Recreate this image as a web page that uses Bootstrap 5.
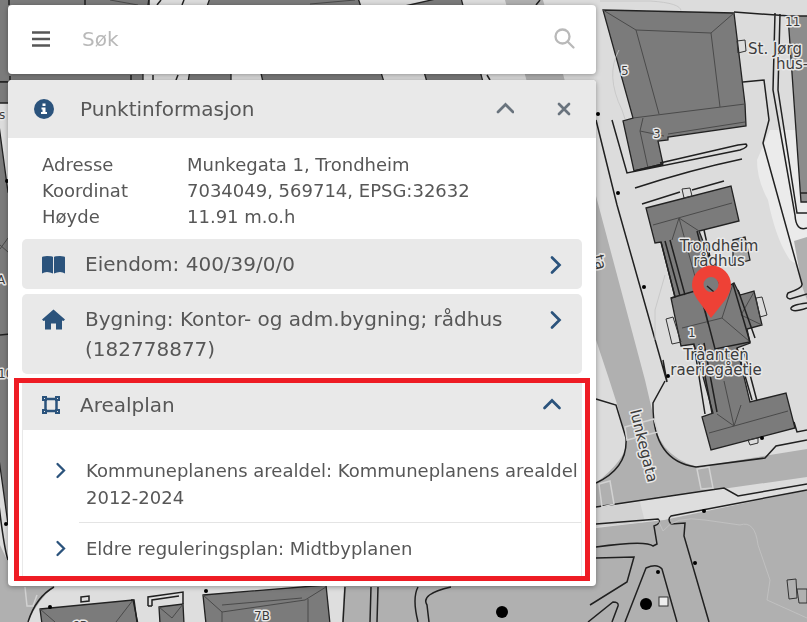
<!DOCTYPE html>
<html lang="no">
<head>
<meta charset="utf-8">
<meta name="viewport" content="width=device-width, initial-scale=1">
<title>Kart – Punktinformasjon</title>
<link href="https://cdn.jsdelivr.net/npm/bootstrap@5.3.0/dist/css/bootstrap.min.css" rel="stylesheet">
<style>
  body { font-family: "DejaVu Sans", Verdana, sans-serif; color: #575757; background: #dcdcdc; min-height: 100vh; overflow: hidden; }
  .map-canvas { position: fixed; inset: 0; width: 100%; height: 100%; }
  .map-canvas text { font-family: "DejaVu Sans", Verdana, sans-serif; fill: #3c3c3c; stroke: #e8e8e8; stroke-width: 3px; paint-order: stroke; stroke-linejoin: round; }
  .side-panel { position: relative; width: 100%; max-width: 604px; padding: 5px 8px; gap: 6px; }
  .sheet { background: #fff; border-radius: 4px; box-shadow: 0 1px 5px rgba(0,0,0,.35); }
  .search-bar { padding: 17px 20px 18px; }
  .search-bar input { font-size: 20px; line-height: 30px; color: #575757; padding: 2px 0; background: transparent; }
  .search-bar input::placeholder { color: #b9b9b9; opacity: 1; }
  .bare-btn { border: 0; background: none; padding: 0; color: inherit; line-height: 1; }
  .tone { background: #e9e9e9; }
  .sheet-head { padding: 14px 22px 14px 24px; border-radius: 4px 4px 0 0; }
  .head-text { font-size: 20px; line-height: 30px; font-weight: 400; margin: 0; }
  .facts { font-size: 18px; line-height: 26px; margin: 14px 34px 9px; }
  .facts th { font-weight: 400; width: 145px; padding: 0; }
  .facts td { padding: 0; }
  .entries { padding: 0 14px; gap: 5px; }
  .entry { padding: 10px 20px; border-radius: 5px; text-align: left; gap: 20px; color: #575757; text-decoration: none; font-size: 20px; line-height: 30px; }
  .blue { color: #2b537c; }
  .slate { color: #69737d; }
  .pale { color: #b9b9b9; }
  .marked-wrap { padding: 4px 6px 5px; }
  .marked { border: 5px solid #ee1c24; padding: 0 3px; }
  .plan-head { padding: 7px 20px 10px; font-size: 20px; line-height: 30px; color: #575757; border: 0; }
  .plan-list { border: solid #e9e9e9; border-width: 0 1px; padding: 27px 0 14px; font-size: 18px; line-height: 27px; }
  .plan-list a { color: #575757; text-decoration: none; padding-left: 32px; }
  .plan-list svg { margin-top: 5px; }
  .plan-name { padding-left: 7px; }
  .plan-first { border-bottom: 1px solid #e4e4e4; padding-bottom: 11px; margin-bottom: 12px; }
</style>
<script src="https://cdn.jsdelivr.net/npm/bootstrap@5.3.0/dist/js/bootstrap.bundle.min.js"></script>
</head>
<body>
<svg class="map-canvas" viewBox="0 0 807 622" preserveAspectRatio="xMinYMin slice" role="img" aria-label="Kart over Trondheim sentrum">
  <rect width="807" height="622" fill="#dcdcdc"/>
  <!-- ground and streets -->
  <g fill="#b0b0b0">
    <path d="M0 545L8 562V622H0ZM0 560H596V622H0Z"/>
    <path d="M505 0H543L596 196L645 380L652 410Q655 455 697 467L807 449V477L596 507V483Q630 456 626 438L617 404L608 376L596 340Z"/>
    <path d="M596 528L664 520L807 490V622H590Z"/>
  </g>
  <path d="M596 508L725 488L738 496L807 484V489L669 515L668 519L658 520L596 527Z" fill="#dedede"/>
  <path d="M596 508L640 502L645 522L596 527Z" fill="#d2d2d2"/>
  <path d="M770 130L757 160Q757 180 768 200Q776 240 790 260L796 264L807 300V130Z" fill="#ebebeb"/>
  <path d="M794 241L807 237V300L802 286Z" fill="#b0b0b0"/>
  <path d="M802 287L807 300V622H802Z" fill="none"/>
  <path d="M28 622Q38 599 56 585H330V622Z" fill="#dedede"/>
  <path d="M327 585H344L342 622H329Z" fill="#dedede"/>
  <!-- buildings -->
  <g fill="#7b7b7b" stroke="#222" stroke-width="1.300">
    <path d="M-2 -2H149L143 40V82H-2Z"/>
    <path d="M210 -2H358L360 4L384 82H263L258 60H231V82H188L195 40Z"/>
    <path d="M405 6L440 -2H461L483 82H427Z"/>
    <path d="M603 10L734 13L745 104L746 126L668 137V140L658 141L663 164L634 171L623 121L633 118Z"/>
    <path d="M788 16H809V202H801Z" fill="#8c8c8c"/>
    <path d="M646 208L731 186L739 221L699 231L722 290L734 283L740 295L754 291L762 325L747 329L750 343L737 348L750 402L786 393L795 428L711 450L702 417L713 413L694 344L681 346L671 298L675 297L661 242L655 243Z"/>
    <path d="M733 240L745 237L750 260L733 265Z" fill="#a6a6a6"/>
    <path d="M40 609L133 600L138 624H42Z"/>
    <path d="M159 607L183 604L184 624H160Z"/>
    <path d="M203 595L326 585L330 624H206Z"/>
    <path d="M-2 82H12V103H-2Z"/>
    <path d="M-2 118L8 192H14V524H8L-2 452Z"/>
  </g>
  <!-- roof ridges -->
  <g fill="none" stroke="#4a4a4a" stroke-width="1">
    <path d="M603 10L636 30L711 33L734 13M636 30L659 114M711 33L720 107M633 118L745 104M668 134L745 122M643 118L640 131L664 136M640 131L648 168"/>
    <path d="M653 225L732 203M672 240L679 218L699 231M679 218L708 324M682 328L722 318L733 284M722 318L749 341M741 315L754 292M741 315L762 325M709 433L788 411M717 414L734 426L741 405M724 381L734 426"/>
    <path d="M40 609L55 622M133 600L116 622M159 607L172 618L183 604M203 595L222 612V622M222 612L305 600L326 587M222 605L302 598M308 599V622M110 0L138 5M310 4L355 0M0 245L8 252M0 249L8 238"/>
  </g>
  <g fill="none" stroke="#202020" stroke-width="1.500">
    <path d="M9 0V5M85 0V5M149 0V5M161 0L157 5M184 0L182 5M131 75V80M153 75V80M178 75L176 80M540 0L536 5M10 76V82M487 75L490 80M0 335L10 334"/>
    <path d="M661 242L675 297M665 241L680 296M670 240L685 295M697 231L706 266M704 230L712 266M671 298L695 291M733 284L750 342L715 349L703 303M738 290L755 338M707 286L714 292"/>
    <path d="M694 345L705 414M699 344L712 413M704 343L717 412M737 348L752 400M743 348L757 401"/>
    <path d="M612 120L627 173L740 150Q749 147 746 144L738 145L660 163M634 171L663 164M635 188Q690 170 742 159M642 204L680 192M692 190L724 181"/>
    <path d="M596 120L617 205L667 382L663 360M665 381L653 403Q652 461 696 467L765 458L776 446L807 440M596 399L616 405L626 438Q628 468 596 483M596 507L724 488L738 496L807 484M596 524L658 519Q662 523 654 526L657 544L653 546Q646 540 596 547M807 490L671 516Q667 519 671 524L685 523L684 536L709 622M596 558L634 557L627 582L590 605M588 622L613 602Q619 602 618 606L612 622M625 622L646 568Q657 563 662 569L677 622M734 12L790 16M743 82L764 80L769 120L763 143L802 284Q803 288 788 293Q785 298 790 299L807 294M807 303Q790 305 791 309Q793 313 807 308M775 13L773 90L795 215Q796 232 807 228M780 14L778 90L797 213H807M794 422L797 432L807 430M801 193H807"/>
    <path d="M28 622Q36 597 54 587M345 587L343 622M371 587L370 622M378 587L377 622M418 587Q412 598 418 622M451 587Q420 594 427 605L429 622M-1 505Q4 548 8 560M148 606V597L183 592V604M152 606V600L179 596M148 606H152M131 600H134L137 622M81 597L89 596V601L81 602Z"/>
  </g>
  <!-- porches, kerbs and crossings -->
  <g fill="none" stroke="#333" stroke-width="1">
    <path d="M737 41L745 40L746 51L738 53ZM682 189L690 188L692 196L684 198ZM666 319L673 317L681 342L672 344ZM756 298L762 297L767 315L760 317ZM748 440L758 438V443L750 445ZM787 580L796 579L797 598L789 599ZM797 589H807V603H799Z"/>
    <rect x="659" y="597" width="9" height="9" fill="#eee"/>
  </g>
  <g fill="none" stroke="#d2d2d2" stroke-width="1.500">
    <path d="M625 427L654 419L658 432L627 440ZM697 469L709 467L713 488L701 489ZM599 484L610 481L614 504L602 507ZM25 587L27 606H33L37 595"/>
  </g>
  <g fill="none" stroke="#c4c4c4" stroke-width=".8">
    <path d="M600 1H650Q681 3 681 11M619 50Q605 75 622 110L625 119M665 275L655 310L655 340M658 520L663 531Q675 515 705 520L740 525Q755 520 758 545L770 580L767 600L807 618"/>
  </g>
  <g fill="#000">
    <circle cx="598" cy="114" r="2"/><circle cx="618" cy="193" r="2"/><circle cx="644" cy="287" r="2"/><circle cx="668" cy="376" r="2"/><circle cx="762" cy="438" r="2"/><circle cx="704" cy="511" r="2"/><circle cx="695" cy="563" r="2"/><circle cx="658" cy="572" r="2"/><circle cx="646" cy="604" r="6"/><circle cx="502" cy="612" r="6"/><circle cx="50" cy="607" r="2"/><circle cx="206" cy="591" r="2"/><circle cx="6" cy="524" r="2"/><circle cx="7" cy="181" r="2"/>
  </g>
  <g font-size="15">
    <text x="748" y="54">St. Jørg</text><text x="776" y="69">hus-</text>
    <text x="719" y="251" text-anchor="middle">Trondheim</text><text x="719" y="266" text-anchor="middle">rådhus</text>
    <text x="716" y="360" text-anchor="middle">Tråanten</text><text x="716" y="375" text-anchor="middle">raeriegåetie</text>
    <text transform="translate(630 411) rotate(76)">lunkegata</text>
    <text transform="translate(593 256) rotate(76)">ta</text>
  </g>
  <g font-size="12" stroke-width="4">
    <text x="621" y="75">5</text><text x="653" y="138">3</text><text x="785" y="26">11</text><text x="688" y="337">1</text><text x="254" y="620">7B</text><text x="72" y="630">6B</text><text x="-2" y="378">10</text><text x="-3" y="284">A</text><text x="-1" y="119">s</text>
  </g>
  <path d="M711 318L697 299Q692 291 692 285A19.500 19.500 0 0 1 731 285Q731 291 726 299ZM711 277A7.500 7.500 0 1 0 711 292A7.500 7.500 0 1 0 711 277Z" fill="#ee4136" fill-rule="evenodd"/>
</svg>

<main class="side-panel d-flex flex-column">
  <form class="sheet search-bar d-flex align-items-center" role="search">
    <button type="button" class="bare-btn ps-1 pe-4" aria-label="Meny"><svg width="18" height="16" viewBox="0 0 18 16" stroke="currentColor" stroke-width="2.500"><path d="M0 1.500H18M0 8H18M0 14.500H18"/></svg></button>
    <input type="text" class="form-control border-0 shadow-none ms-2" placeholder="Søk" aria-label="Søk">
    <button type="submit" class="bare-btn pale" aria-label="Søk"><svg width="22" height="22" viewBox="0 0 22 22" fill="none" stroke="currentColor" stroke-width="2.300" stroke-linecap="round"><circle cx="8.500" cy="8.500" r="7"/><path d="M13.500 13.500L19.500 19.500"/></svg></button>
  </form>

  <section class="sheet">
    <header class="sheet-head tone d-flex align-items-center">
      <svg class="blue me-4" width="24" height="24" viewBox="0 0 24 24"><circle cx="12" cy="12" r="10" fill="currentColor"/><path d="M10.500 6.500H13.500V9H10.500ZM9.500 10.500H13.500V15H15V17H9V15H10.500V12.500H9.500Z" fill="#fff"/></svg>
      <h1 class="head-text flex-grow-1">Punktinformasjon</h1>
      <button type="button" class="bare-btn slate" aria-label="Skjul"><svg width="20" height="20" viewBox="0 0 20 20" fill="none" stroke="currentColor" stroke-width="2.700" stroke-linecap="round"><path d="M4 13L11.500 5.500L19 13"/></svg></button>
      <button type="button" class="bare-btn slate ms-4 ps-3" aria-label="Lukk"><svg width="20" height="20" viewBox="0 0 20 20" fill="none" stroke="currentColor" stroke-width="2.700" stroke-linecap="round"><path d="M5 5L15 15M15 5L5 15"/></svg></button>
    </header>
    <table class="facts">
      <tbody>
        <tr><th scope="row">Adresse</th><td>Munkegata 1, Trondheim</td></tr>
        <tr><th scope="row">Koordinat</th><td>7034049, 569714, EPSG:32632</td></tr>
        <tr><th scope="row">Høyde</th><td>11.91 m.o.h</td></tr>
      </tbody>
    </table>
    <div class="entries d-flex flex-column">
      <a href="#eiendom" class="entry tone d-flex align-items-start">
        <svg class="blue flex-shrink-0 mt-1" width="23" height="22" viewBox="0 0 23 22" fill="currentColor"><path d="M0 4.500Q0 3 5 3Q10 3 11 4V20.500Q8 19 5 19Q2 19 0 20.500ZM12 4Q13 3 18 3Q23 3 23 4.500V20.500Q21 19 18 19Q15 19 12 20.500Z"/></svg>
        <span class="flex-grow-1">Eiendom: 400/39/0/0</span>
        <svg class="blue flex-shrink-0 mt-1" width="12" height="22" viewBox="0 0 12 22" fill="none" stroke="currentColor" stroke-width="2.700" stroke-linecap="round"><path d="M2 4.500L9.500 12L2 19.500"/></svg>
      </a>
      <a href="#bygning" class="entry tone d-flex align-items-start">
        <svg class="blue flex-shrink-0 mt-1" width="23" height="22" viewBox="0 0 23 22" fill="currentColor"><path d="M11.500 1.500L23 11.500L21.500 13L20 12.500V21.500H14V15.500H9V21.500H3V12.500L1.500 13L0 11.500Z"/></svg>
        <span class="flex-grow-1">Bygning: Kontor- og adm.bygning; rådhus (182778877)</span>
        <svg class="blue flex-shrink-0 mt-1" width="12" height="22" viewBox="0 0 12 22" fill="none" stroke="currentColor" stroke-width="2.700" stroke-linecap="round"><path d="M2 4.500L9.500 12L2 19.500"/></svg>
      </a>
    </div>
    <div class="marked-wrap">
      <section class="marked">
        <button type="button" class="plan-head tone w-100 d-flex align-items-center text-start" data-bs-toggle="collapse" data-bs-target="#plans" aria-expanded="true" aria-controls="plans">
          <svg class="blue me-3" width="18" height="18" viewBox="0 0 18 18" fill="none" stroke="currentColor" stroke-width="2.500"><path d="M3 3H15M3 15H15M3.500 3V15M14.500 3V15"/><g fill="#e9e9e9" stroke-width="2"><rect x="1" y="1" width="3" height="3"/><rect x="14" y="1" width="3" height="3"/><rect x="1" y="14" width="3" height="3"/><rect x="14" y="14" width="3" height="3"/></g></svg>
          <span class="flex-grow-1 ps-1">Arealplan</span>
          <svg class="blue" width="20" height="20" viewBox="0 0 20 20" fill="none" stroke="currentColor" stroke-width="2.700" stroke-linecap="round"><path d="M2.500 13L10 5.500L17.500 13"/></svg>
        </button>
        <div id="plans" class="collapse show">
          <div class="plan-list">
            <a href="#kommuneplan" class="d-flex">
              <svg class="blue flex-shrink-0" width="24" height="18" viewBox="0 0 24 18" fill="none" stroke="currentColor" stroke-width="2.300" stroke-linecap="round"><path d="M2.500 2L9 8.500L2.500 15"/></svg>
              <span class="plan-name plan-first flex-grow-1">Kommuneplanens arealdel: Kommuneplanens arealdel 2012-2024</span>
            </a>
            <a href="#reguleringsplan" class="d-flex">
              <svg class="blue flex-shrink-0" width="24" height="18" viewBox="0 0 24 18" fill="none" stroke="currentColor" stroke-width="2.300" stroke-linecap="round"><path d="M2.500 2L9 8.500L2.500 15"/></svg>
              <span class="plan-name flex-grow-1">Eldre reguleringsplan: Midtbyplanen</span>
            </a>
          </div>
        </div>
      </section>
    </div>
  </section>
</main>
</body>
</html>
